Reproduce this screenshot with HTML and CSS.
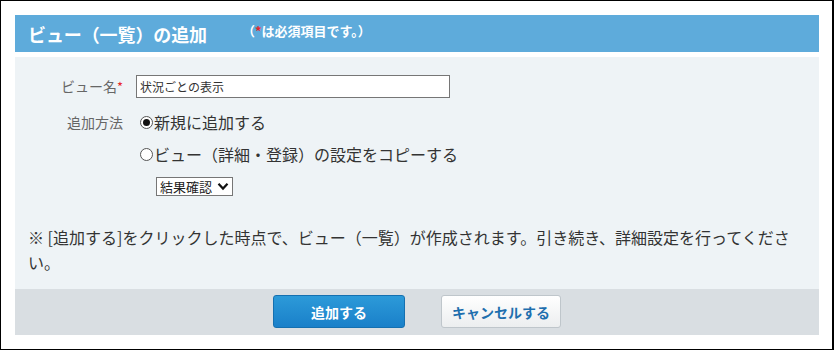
FILE: index.html
```html
<!DOCTYPE html>
<html lang="ja">
<head>
<meta charset="utf-8">
<title>ビュー（一覧）の追加</title>
<link rel="stylesheet" href="styles.css">
</head>
<body>
<div class="frame">
  <div class="dialog">
    <div class="header">
      <h1 class="title">ビュー（一覧）の追加</h1>
      <span class="note-req">（<span class="req">*</span>は必須項目です。）</span>
    </div>
    <div class="panel">
      <div class="form">
        <div class="label label-name">ビュー名<span class="req">*</span></div>
        <div class="value"><input class="text-input" type="text" value="状況ごとの表示"></div>
        <div class="label label-method">追加方法</div>
        <div class="value options">
          <div class="opt"><span class="radio checked"></span>新規に追加する</div>
          <div class="opt"><span class="radio"></span>ビュー（詳細・登録）の設定をコピーする</div>
          <div class="opt sel-row">
            <span class="select">結果確認<svg class="chev" width="12" height="9" viewBox="0 0 12 9"><path d="M1.5 1.8 L6 6.6 L10.5 1.8" fill="none" stroke="#111" stroke-width="2.2"/></svg></span>
          </div>
        </div>
      </div>
      <p class="notice">※ [追加する]をクリックした時点で、ビュー（一覧）が作成されます。引き続き、詳細設定を行ってください。</p>
    </div>
    <div class="footer">
      <button class="btn btn-primary" type="button">追加する</button>
      <button class="btn btn-cancel" type="button">キャンセルする</button>
    </div>
  </div>
</div>
</body>
</html>
```
FILE: styles.css
```css
* { box-sizing: border-box; }
html, body { margin: 0; padding: 0; background: #fff; }
body {
  font-family: "Noto Sans CJK JP", "Noto Sans", sans-serif;
  color: #333;
}
.frame {
  width: 834px;
  height: 350px;
  border: 1px solid #000;
  border-right-width: 2px;
  padding: 14px 0 0 14px;
}
.dialog { width: 804px; }
.header {
  height: 37px;
  background: #5eabdb;
  display: flex;
  align-items: center;
  padding-left: 13px;
  color: #fff;
}
.title {
  margin: 0;
  font-size: 18px;
  font-weight: bold;
  line-height: 1;
  letter-spacing: -0.1px;
}
.note-req {
  margin-left: 35px;
  font-size: 13px;
  font-weight: bold;
  margin-top: -6px;
}
.req { color: #e8262b; }
.panel {
  margin-top: 5px;
  background: #eef3f6;
  padding: 18px 13px 14px 13px;
}
.form {
  display: grid;
  grid-template-columns: 95px 1fr;
  column-gap: 13px;
}
.label {
  text-align: right;
  font-size: 14px;
  color: #666;
  line-height: 23px;
}
.label-method { margin-top: 8px; line-height: 32px; }
.label .req { font-size: 13px; }
.text-input {
  width: 314px;
  height: 23px;
  border: 1px solid #767676;
  background: #fff;
  font-family: "Noto Sans CJK JP", sans-serif;
  font-size: 12px;
  color: #333;
  padding: 0 3px;
  margin: 0;
  display: block;
}
.options { margin-top: 8px; }
.opt {
  display: flex;
  align-items: center;
  height: 32px;
  font-size: 16px;
  color: #333;
  margin-left: 4px;
}
.radio {
  width: 13px;
  height: 13px;
  border: 1px solid #555;
  border-radius: 50%;
  margin: 0 1px 0 0;
  display: inline-flex;
  align-items: center;
  justify-content: center;
  background: #fff;
}
.radio.checked::after {
  content: "";
  width: 7px;
  height: 7px;
  border-radius: 50%;
  background: #111;
}
.sel-row { padding-left: 16px; }
.select {
  display: inline-flex;
  align-items: center;
  height: 19px;
  border: 1px solid #767676;
  background: #fff;
  font-size: 13px;
  color: #222;
  padding: 0 3px 0 3px;
  gap: 5px;
}
.notice {
  margin: 23px 0 0 0;
  font-size: 16px;
  line-height: 25px;
  color: #333;
}
.footer {
  background: #d9dee2;
  height: 46px;
  display: flex;
  justify-content: center;
  align-items: flex-start;
  padding-top: 6px;
  gap: 36px;
}
.btn {
  height: 33px;
  border-radius: 3px;
  font-family: "Noto Sans CJK JP", sans-serif;
  font-size: 14px;
  font-weight: bold;
  cursor: pointer;
  padding: 0;
}
.btn-primary {
  width: 132px;
  background: linear-gradient(#2c9ad9, #1a80c9);
  border: 1px solid #1570b0;
  color: #fff;
}
.btn-cancel {
  width: 120px;
  background: linear-gradient(#ffffff, #eceeef);
  border: 1px solid #bfc6cb;
  color: #1e6fae;
}
```
